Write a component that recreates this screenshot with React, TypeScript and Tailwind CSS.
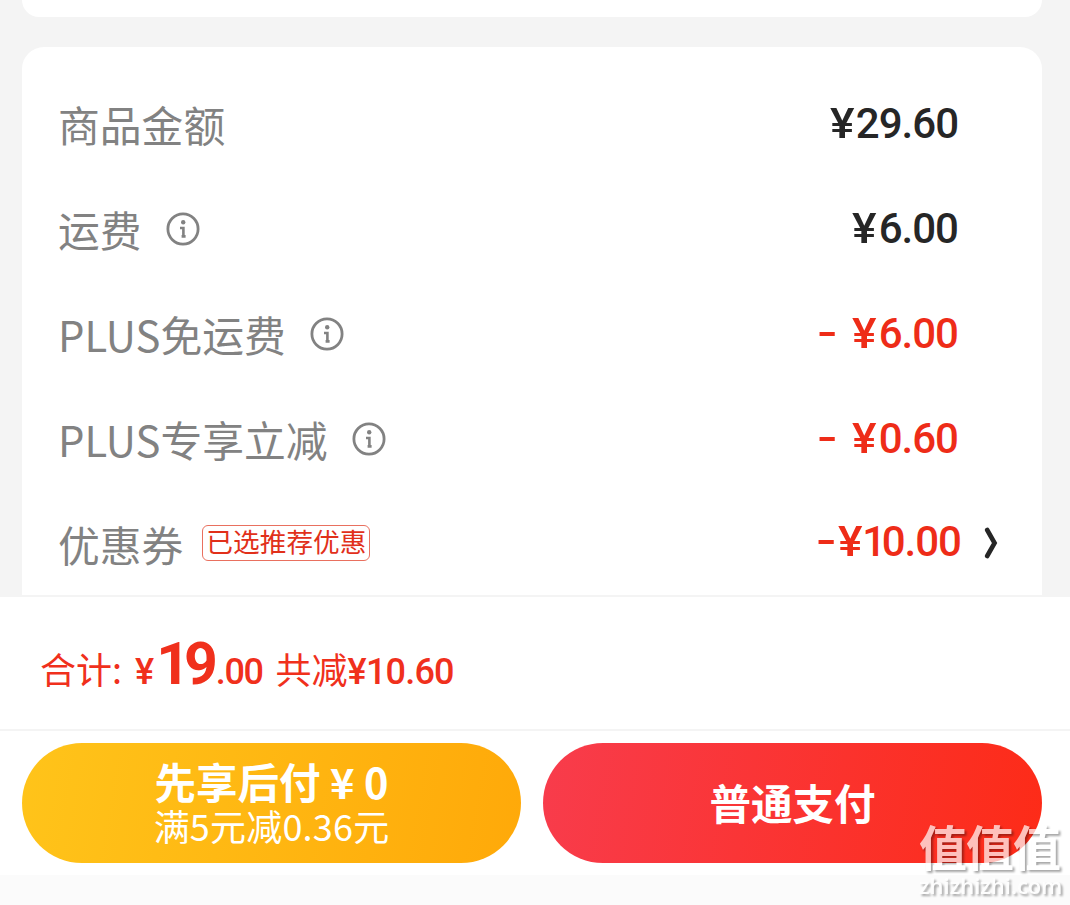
import clsx from 'clsx';

interface IPriceRow {
  label: string;
  sign?: string;
  amount: string;
  info?: boolean;
  discount?: boolean;
}

const priceRows: IPriceRow[] = [
  { label: '商品金额', amount: '29.60' },
  { label: '运费', amount: '6.00', info: true },
  { label: 'PLUS免运费', sign: '-', amount: '6.00', info: true, discount: true },
  { label: 'PLUS专享立减', sign: '-', amount: '0.60', info: true, discount: true },
];

function InfoIcon() {
  return (
    <svg width="34" height="34" viewBox="0 0 34 34" fill="none" className="mb-[3px] ml-[24px]">
      <circle cx="17" cy="17" r="15.1" stroke="#828282" strokeWidth="2.8" />
      <circle cx="17.2" cy="10.3" r="2.2" fill="#828282" />
      <path d="M14 16h3.4v8.6M15.6 24.4h4" stroke="#828282" strokeWidth="2.6" />
    </svg>
  );
}

function Label({ children }: { children: string }) {
  return <p className="pb-[2px] text-[41.8px] leading-none text-[#828282]">{children}</p>;
}

function Amount({ sign, amount }: { sign?: string; amount: string }) {
  return (
    <>
      {sign && <span className="relative -top-px inline-block mr-[20px] scale-x-[1.4]">{sign}</span>}
      <span className="inline-block mr-[4px] scale-x-[1.1]">¥</span>
      {amount}
    </>
  );
}

export default function App() {
  return (
    <main className="flex flex-col w-[1070px] h-[905px] overflow-hidden bg-[#f4f4f4] font-['Noto_Sans_CJK_SC',sans-serif] whitespace-nowrap">
      <div className="flex-none ml-[22px] mr-[28px] h-[17px] rounded-b-[22px] bg-white" />

      <section className="flex-none mt-[30px] ml-[22px] mr-[28px] h-[548px] pt-[26px] pl-[36px] rounded-t-[22px] bg-white">
        {priceRows.map(row => (
          <div key={row.label} className="flex items-center h-[105px]">
            <Label>{row.label}</Label>
            {row.info && <InfoIcon />}
            <p
              className={clsx(
                'ml-auto mr-[84px] pb-[4px] font-[Roboto,sans-serif] text-[42px] leading-none font-medium tracking-[-1px]',
                row.discount ? 'text-[#ee2c18]' : 'text-[#262626]'
              )}
            >
              <Amount sign={row.sign} amount={row.amount} />
            </p>
          </div>
        ))}
        <div className="flex items-center h-[105px]">
          <Label>优惠券</Label>
          <span className="flex items-center justify-center mb-[6px] ml-[19px] w-[168px] h-[36px] pb-[2px] rounded-[6px] border border-[#e9705f] text-[26.7px] leading-none text-[#e1301a]">
            已选推荐优惠
          </span>
          <p className="ml-auto pb-[8px] font-[Roboto,sans-serif] text-[42px] leading-none font-medium tracking-[-1px] text-[#ee2c18]">
            <span className="relative -top-px inline-block mr-[7px] scale-x-[1.4]">-</span>
            <span className="inline-block mr-[2px] scale-x-[1.1]">¥</span>
            <span className="tracking-[-4.5px]">1</span>
            0.00
          </p>
          <svg width="14" height="32" viewBox="0 0 14 32" fill="none" className="mb-[6px] ml-[23px] mr-[44px]">
            <path d="M3.2 3L10.6 16L3.2 29" stroke="#262626" strokeWidth="4.6" strokeLinecap="round" />
          </svg>
        </div>
      </section>

      <footer className="flex-none border-t-2 border-[#f4f4f4] bg-white">
        <div className="flex items-baseline h-[132px] pt-[37px] pl-[40px] text-[#f0301c]">
          <span className="text-[36px] leading-[60px]">合计:</span>
          <span className="ml-[13px] font-[Roboto,sans-serif] text-[36px] font-medium leading-[60px]">¥</span>
          <span className="ml-[2px] font-[Roboto,sans-serif] text-[59px] leading-[60px] font-bold tracking-[-6px]">19</span>
          <span className="ml-[4px] font-[Roboto,sans-serif] text-[36px] leading-[60px] font-medium tracking-[-1.4px]">.00</span>
          <span className="ml-[13px] text-[36px] leading-[60px]">共减</span>
          <span className="font-[Roboto,sans-serif] text-[36px] leading-[60px] font-medium tracking-[-0.8px]">¥10.60</span>
        </div>
        <div className="flex gap-[22px] h-[146px] pt-[12px] px-[22px] border-t-2 border-[#f4f4f4]">
          <button
            type="button"
            className="flex flex-col items-center w-[499px] h-[120px] pt-[15px] rounded-full bg-[linear-gradient(100deg,#ffc41a,#ffa909)] text-white"
          >
            <span className="text-[41.5px] leading-[46px] font-bold">先享后付 ¥ 0</span>
            <span className="text-[36px] leading-[42px] tracking-[0.2px]">满5元减0.36元</span>
          </button>
          <button
            type="button"
            className="flex items-center justify-center w-[499px] h-[120px] rounded-full bg-[linear-gradient(100deg,#f83c4c,#fd2b17)] text-[41.5px] leading-none font-bold text-white"
          >
            普通支付
          </button>
        </div>
        <div className="h-[30px] bg-[#fbfbfb]" />
      </footer>

      <div className="absolute left-[919px] top-[821px] flex flex-col text-white opacity-70 drop-shadow-[2px_2px_1px_rgba(0,0,0,0.5)]">
        <span className="text-[48px] leading-[48px] font-bold tracking-[-1px]">值值值</span>
        <span className="pt-[3px] font-['Open_Sans',sans-serif] text-[22px] leading-[26px] font-semibold">zhizhizhi.com</span>
      </div>
    </main>
  );
}
